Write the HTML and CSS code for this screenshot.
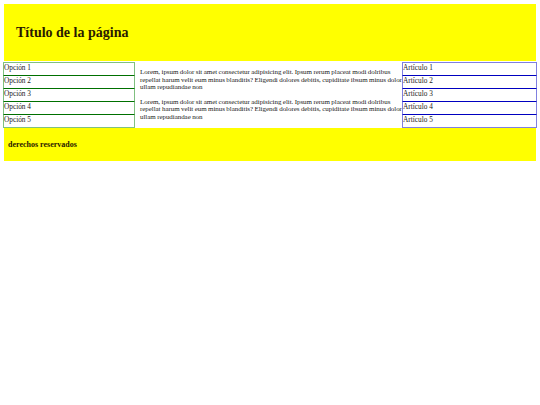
FILE: index.html
```
<!DOCTYPE html>
<html lang="es">
<head>
<meta charset="utf-8">
<title>Título de la página</title>
<link rel="stylesheet" href="styles.css">
</head>
<body>
<div class="page">
  <header class="header">
    <h1 class="title">Título de la página</h1>
  </header>
  <main class="main">
    <nav class="nav">
      <div class="nav-item">Opción 1</div>
      <div class="nav-item">Opción 2</div>
      <div class="nav-item">Opción 3</div>
      <div class="nav-item">Opción 4</div>
      <div class="nav-item">Opción 5</div>
    </nav>
    <section class="content">
      <p class="para">Lorem, ipsum dolor sit amet consectetur adipisicing elit. Ipsum rerum placeat modi dolribus<br>repellat harum velit eum minus blanditis? Eligendi dolores debitis, cupiditate ibsum minus dolor<br>ullam repudiandae non</p>
      <p class="para">Lorem, ipsum dolor sit amet consectetur adipisicing elit. Ipsum rerum placeat modi dolribus<br>repellat harum velit eum minus blanditis? Eligendi dolores debitis, cupiditate ibsum minus dolor<br>ullam repudiandae non</p>
    </section>
    <aside class="aside">
      <div class="aside-item">Artículo 1</div>
      <div class="aside-item">Artículo 2</div>
      <div class="aside-item">Artículo 3</div>
      <div class="aside-item">Artículo 4</div>
      <div class="aside-item">Artículo 5</div>
    </aside>
  </main>
  <footer class="footer">
    <span class="footer-text">derechos reservados</span>
  </footer>
</div>
</body>
</html>
```
FILE: styles.css
```
html, body {
  margin: 0;
  padding: 0;
  background: #ffffff;
}
body {
  font-family: "Liberation Serif", "Times New Roman", serif;
  color: #000;
}
.page {
  margin: 4px 4px 0 3px;
}
.header {
  background: #ffff00;
  height: 57px;
  margin-left: 1px;
  display: flex;
  align-items: center;
  padding-left: 12px;
  box-sizing: border-box;
}
.title {
  margin: 0;
  font-size: 14px;
  font-weight: bold;
  color: #2a1a00;
}
.main {
  display: flex;
  margin-top: 1px;
}
.nav {
  width: 132px;
  flex-shrink: 0;
  display: flex;
  flex-direction: column;
}
.nav-item, .aside-item {
  flex: 1;
  font-size: 7.3px;
  line-height: 9px;
  padding: 0 1px 0 0;
  color: #1a1a1a;
}
.nav-item {
  border-left: 1px solid #80c080;
  border-right: 1px solid #80c080;
  border-bottom: 1.5px solid #007000;
}
.nav-item:first-child {
  border-top: 1px solid #80c080;
}
.nav-item:last-child {
  border-bottom: 1px solid #80c080;
}
.aside {
  width: 135px;
  flex-shrink: 0;
  display: flex;
  flex-direction: column;
  margin-right: -1px;
}
.aside-item {
  border-left: 1px solid #8080e0;
  border-right: 1px solid #8080e0;
  border-bottom: 1.5px solid #0000c0;
}
.aside-item:first-child {
  border-top: 1px solid #8080e0;
}
.aside-item:last-child {
  border-bottom: 1px solid #8080e0;
}
.content {
  flex: 1;
  min-width: 0;
  padding: 0 0 0 5px;
  white-space: nowrap;
}
.para {
  font-size: 7px;
  line-height: 7.5px;
  margin: 7px 0;
  color: #1a1a1a;
  letter-spacing: -0.06px;
  word-spacing: -0.2px;
}
.footer {
  background: #ffff00;
  height: 33px;
  margin-left: 1px;
  display: flex;
  align-items: center;
  padding-left: 4px;
}
.footer-text {
  font-size: 8px;
  font-weight: bold;
  color: #2a1a00;
}
```
